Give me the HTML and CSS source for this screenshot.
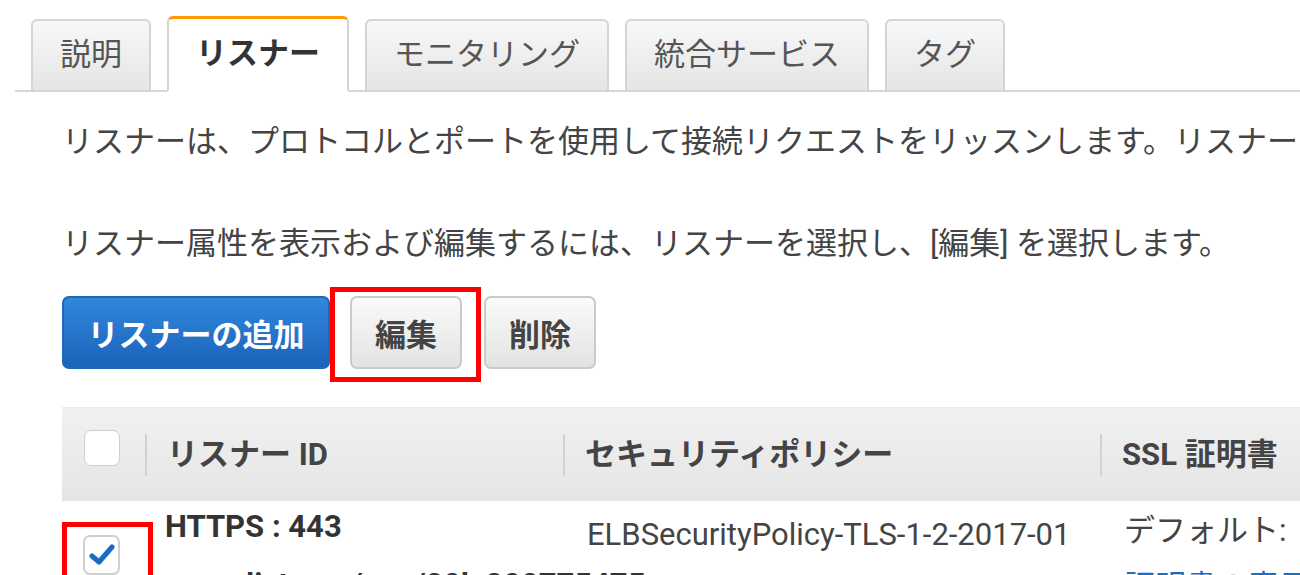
FILE: index.html
```html
<!DOCTYPE html>
<html lang="ja">
<head>
    <meta charset="UTF-8">
    <title>リスナー</title>
    <link rel="stylesheet" href="styles.css">
</head>
<body>
    <div class="tabs">
        <div class="tab">説明</div>
        <div class="tab active">リスナー</div>
        <div class="tab">モニタリング</div>
        <div class="tab">統合サービス</div>
        <div class="tab">タグ</div>
    </div>

    <div class="content">
        <p class="desc">リスナーは、プロトコルとポートを使用して接続リクエストをリッスンします。リスナーのルールによって、ロードバランサーがリクエストをルーティングする方法が決まります。</p>
        <p class="desc second">リスナー属性を表示および編集するには、リスナーを選択し、[編集] を選択します。</p>

        <div class="actions">
            <button class="btn primary">リスナーの追加</button>
            <span class="marked edit-mark"><button class="btn">編集</button></span>
            <button class="btn delete">削除</button>
        </div>

        <div class="table">
            <div class="thead">
                <div class="th check-col"><span class="checkbox"></span></div>
                <div class="th">リスナー ID</div>
                <div class="th">セキュリティポリシー</div>
                <div class="th">SSL 証明書</div>
            </div>
            <div class="trow">
                <div class="td check-col">
                    <span class="marked check-mark">
                        <span class="checkbox checked">
                            <svg width="26" height="22" viewBox="0 0 26 22"><path d="M3 12 L10 18 L23 3" fill="none" stroke="#1a6bc6" stroke-width="5" stroke-linecap="round" stroke-linejoin="round"/></svg>
                        </span>
                    </span>
                </div>
                <div class="td">
                    <div class="listener-id">HTTPS : 443</div>
                    <div class="arn">arn:...listener/app/20k 200775475</div>
                </div>
                <div class="td">
                    <div class="policy">ELBSecurityPolicy-TLS-1-2-2017-01</div>
                </div>
                <div class="td cert">
                    <div>デフォルト:</div>
                    <a class="link" href="#">証明書の表示</a>
                </div>
            </div>
        </div>
    </div>
</body>
</html>
```

FILE: styles.css
```css
body {
    margin: 0;
    padding: 0;
    width: 1300px;
    height: 575px;
    overflow: hidden;
    background-color: #fff;
    color: #444;
    font-family: Roboto, "Noto Sans CJK JP", sans-serif;
    font-size: 31px;
}
/* Tabs */
.tabs {
    display: flex;
    gap: 16px;
    height: 74px;
    margin: 16px 0 0 15px;
    padding-left: 16px;
    border-bottom: 2px solid #d6d6d6;
    align-items: flex-end;
}
.tab {
    box-sizing: border-box;
    height: 73px;
    line-height: 68px;
    padding: 0 27px;
    margin-bottom: -2px;
    border: 2px solid #d4d4d4;
    border-bottom: 2px solid #d6d6d6;
    border-radius: 6px 6px 0 0;
    background: linear-gradient(#f8f8f8, #e5e5e5);
    color: #555;
    white-space: nowrap;
}
.tab.active {
    height: 76px;
    line-height: 70px;
    border-top: 3px solid #ff9900;
    border-bottom-color: #fff;
    background: #fff;
    font-weight: bold;
    color: #333;
}
/* Content */
.content {
    padding-left: 62px;
}
.desc {
    margin: 30px 0 0;
    line-height: 40px;
    white-space: nowrap;
    color: #444;
}
.desc.second {
    margin-top: 62px;
}
.actions {
    display: flex;
    gap: 20px;
    margin-top: 32px;
    align-items: center;
}
.btn {
    height: 73px;
    padding: 0 23px;
    border: 2px solid #cacaca;
    border-radius: 7px;
    background: linear-gradient(#fafafa, #e3e3e3);
    font-family: inherit;
    font-size: 31px;
    font-weight: bold;
    color: #444;
}
.btn.primary {
    width: 268px;
    padding: 0;
    border-color: #1e66b8;
    background: linear-gradient(#3187dc, #1b63ba);
    color: #fff;
}
.btn.delete {
    margin-left: 2px;
}
/* Red annotation boxes */
.marked {
    position: relative;
    display: inline-flex;
}
.marked::after {
    content: "";
    position: absolute;
    border: 5px solid #ff0000;
    pointer-events: none;
}
.edit-mark::after {
    left: -20px;
    right: -19px;
    top: -9px;
    bottom: -13px;
}
.check-mark::after {
    left: -21px;
    right: -33px;
    top: -13px;
    bottom: -20px;
}
/* Table */
.table {
    margin-top: 38px;
    width: 1400px;
}
.thead, .trow {
    display: grid;
    grid-template-columns: 83px 418px 537px 1fr;
}
.thead {
    height: 93px;
    align-items: center;
    background: linear-gradient(#f1f1f1, #e5e5e5);
    border-top: 1px solid #ececec;
}
.th {
    height: 42px;
    line-height: 42px;
    padding-left: 20px;
    border-left: 2px solid #d2d2d2;
    font-weight: bold;
    color: #444;
    white-space: nowrap;
}
.th.check-col {
    border-left: none;
    padding-left: 22px;
}
.th.check-col .checkbox {
    margin-top: -16px;
}
.checkbox {
    display: inline-block;
    box-sizing: border-box;
    width: 36px;
    height: 36px;
    vertical-align: middle;
    border: 1px solid #cfcfcf;
    border-radius: 7px;
    background: #fff;
}
.checkbox.checked {
    display: inline-flex;
    align-items: center;
    justify-content: center;
    width: 37px;
    height: 40px;
    border: 2px solid #cfcfcf;
}
.trow {
    padding-top: 9px;
}
.td {
    padding-left: 24px;
    line-height: 34px;
    white-space: nowrap;
}
.td.check-col {
    padding: 25px 0 0 21px;
}
.td:nth-child(2) {
    padding-left: 20px;
}
.td:nth-child(3) {
    padding-top: 8px;
}
.td.cert {
    padding-top: 4px;
}
.listener-id {
    font-weight: bold;
    color: #333;
}
.arn {
    margin-top: 24px;
    font-weight: bold;
    color: #333;
}
.link {
    display: block;
    margin-top: 22px;
    color: #1670c4;
    text-decoration: none;
}
.policy {
    color: #444;
}
```
